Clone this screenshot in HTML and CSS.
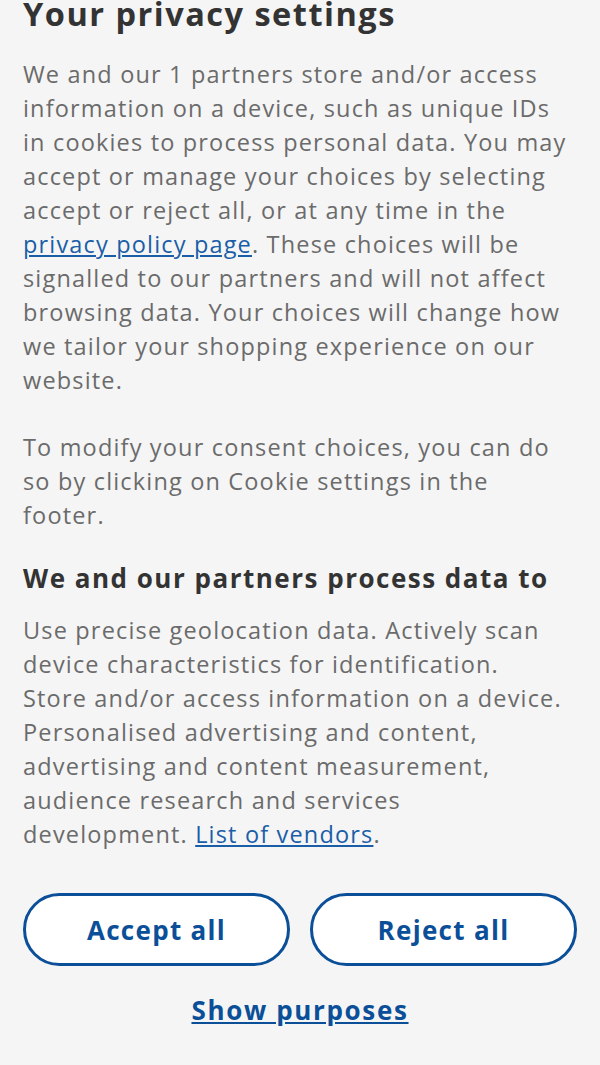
FILE: index.html
```html
<!DOCTYPE html>
<html lang="en">
<head>
<meta charset="utf-8">
<link rel="stylesheet" href="styles.css">
</head>
<body>
<div class="panel">
  <h1 class="title">Your privacy settings</h1>
  <p class="text text-first">We and our 1 partners store and/or access<br>information on a device, such as unique IDs<br>in cookies to process personal data. You may<br>accept or manage your choices by selecting<br>accept or reject all, or at any time in the<br><a class="link" href="#">privacy policy page</a>. These choices will be<br>signalled to our partners and will not affect<br>browsing data. Your choices will change how<br>we tailor your shopping experience on our<br>website.</p>
  <p class="text">To modify your consent choices, you can do<br>so by clicking on Cookie settings in the<br>footer.</p>
  <h2 class="subtitle">We and our partners process data to</h2>
  <p class="text">Use precise geolocation data. Actively scan<br>device characteristics for identification.<br>Store and/or access information on a device.<br>Personalised advertising and content,<br>advertising and content measurement,<br>audience research and services<br>development. <a class="link" href="#">List of vendors</a>.</p>
  <div class="buttons">
    <button class="btn">Accept all</button>
    <button class="btn">Reject all</button>
  </div>
  <div class="more"><a class="more-link" href="#">Show purposes</a></div>
</div>
</body>
</html>
```
FILE: styles.css
```css
html, body {
  margin: 0;
  padding: 0;
  background: #f5f5f5;
}
body {
  font-family: "Open Sans", "Liberation Sans", sans-serif;
}
.panel {
  padding: 0 23px;
  margin-top: -12px;
}
.title {
  margin: 0;
  font-size: 32.5px;
  line-height: 52px;
  font-weight: 700;
  letter-spacing: 1.5px;
  color: #333;
}
.text {
  margin: 0 0 29px;
  font-size: 23.5px;
  line-height: 34px;
  letter-spacing: 1.17px;
  color: #6b6b6b;
  white-space: nowrap;
}
.text-first {
  margin-top: 17px;
  margin-bottom: 33px;
}
.link {
  color: #1a5ea8;
  text-decoration: underline;
}
.subtitle {
  margin: 0 0 18px;
  font-size: 26px;
  line-height: 34px;
  font-weight: 700;
  letter-spacing: 1.5px;
  color: #333;
}
.buttons {
  display: flex;
  gap: 20px;
  margin-top: 42px;
}
.btn {
  flex: 1;
  height: 73px;
  border: 3px solid #0b4f99;
  border-radius: 37px;
  background: #fff;
  color: #0b4f99;
  font-family: inherit;
  font-size: 26px;
  font-weight: 700;
  letter-spacing: 1.3px;
}
.more {
  text-align: center;
  margin-top: 26px;
}
.more-link {
  color: #0b4f99;
  font-size: 26px;
  font-weight: 700;
  letter-spacing: 1.65px;
  text-decoration: underline;
}
```
